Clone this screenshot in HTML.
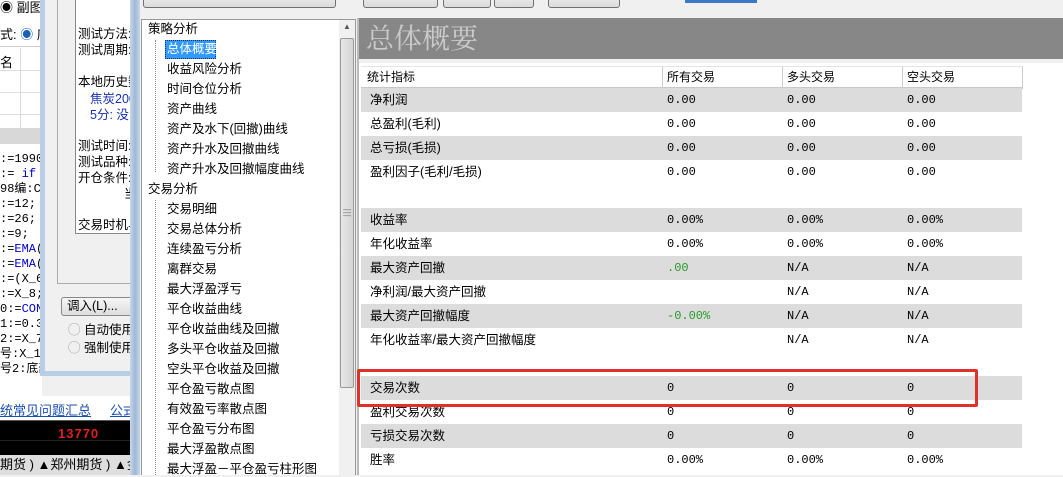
<!DOCTYPE html>
<html><head><meta charset="utf-8"><style>
*{margin:0;padding:0;box-sizing:border-box}
body{width:1063px;height:475px;overflow:hidden;position:relative;background:#f0f0f0;font-family:"Liberation Sans","Noto Sans CJK SC",sans-serif;font-size:12px;color:#000}
.a{position:absolute;white-space:nowrap}
.code{font-family:"Liberation Mono","Noto Sans CJK SC",monospace;font-size:12px;line-height:15px}
.btn{position:absolute;top:-10px;height:18px;border:1px solid #707070;border-radius:3px;background:linear-gradient(#f2f2f2,#dcdcdc)}
.ti{position:absolute;left:167px;font-size:12.5px;line-height:16px}
.row{position:absolute;left:361px;width:661px;height:24px;font-size:12.5px;line-height:24px}
.row span{position:absolute}
.g{background:#dcdcdc}
.mono{font-family:"Liberation Mono",monospace;font-size:12px}
</style></head><body>
<div class="a" style="left:0;top:0;width:42px;height:475px;background:#fff"></div>
<div class="a" style="left:0;top:0;font-size:13px;line-height:16px">◉ 副图</div>
<div class="a" style="left:0;top:24px;font-size:13px">式: <span style="color:#1a5fb4">◉</span> 序</div>
<div class="a" style="left:0;top:46px;width:42px;height:1px;background:#ccc"></div>
<div class="a" style="left:0;top:52px;font-size:13px">名</div>
<div class="a" style="left:20px;top:48px;width:1px;height:80px;background:#ddd"></div>
<div class="a" style="left:0;top:70px;width:42px;height:1px;background:#ddd"></div>
<div class="a" style="left:0;top:92px;width:42px;height:1px;background:#ddd"></div>
<div class="a" style="left:0;top:114px;width:42px;height:1px;background:#ddd"></div>
<div class="a" style="left:0;top:128px;width:42px;height:16px;background:#d8d8d8"></div>
<div class="a code" style="left:0;top:152px">:=1990<br>:= <span style="color:#00c">if</span><br>98编:C<br>:=12;<br>:=26;<br>:=9;<br>:=<span style="color:#00c">EMA</span>(<br>:=<span style="color:#00c">EMA</span>(<br>:=(X_6<br>:=X_8;<br>0:=<span style="color:#00c">CON</span><br>1:=0.3<br>2:=X_7<br>号:X_12<br>号2:底部 <span style="color:#00c">AND COUNT</span></div>
<div class="a" style="left:0;top:396px;width:140px;height:24px;background:#fff"></div>
<div class="a" style="left:0;top:400px;font-size:13px;color:#1a4fb0;text-decoration:underline">统常见问题汇总</div>
<div class="a" style="left:110px;top:400px;font-size:13px;color:#1a4fb0;text-decoration:underline">公式</div>
<div class="a" style="left:0;top:420px;width:140px;height:35px;background:#000;border-top:1px solid #555"></div>
<div class="a" style="left:0;top:440px;width:140px;height:1px;background:#222"></div>
<div class="a" style="left:58px;top:426px;color:#e02020;font-weight:bold;font-size:13px;letter-spacing:1px">13770</div>
<div class="a" style="left:0;top:455px;width:140px;height:20px;background:#dedede;font-size:13px;line-height:20px">期货 ) ▲郑州期货 ) ▲金</div>
<div class="a" style="left:40px;top:0;width:95px;height:376px;background:#f0f0f0;border-left:5px solid #b9cde5;border-bottom:5px solid #b9cde5"></div>
<div class="a" style="left:57px;top:0;width:80px;height:284px;border:1px solid #aaa;border-top:none"></div>
<div class="a" style="left:75px;top:0;width:60px;height:234px;background:#fff;border:1px solid #888;border-top:none;overflow:hidden;font-size:12.5px;line-height:16px">
<div style="position:absolute;top:26px;left:2px">测试方法:<br>测试周期:</div>
<div style="position:absolute;top:74px;left:2px">本地历史数</div>
<div style="position:absolute;top:91px;left:14px;color:#1a2fb0">焦炭200<br>5分: 没</div>
<div style="position:absolute;top:138px;left:2px">测试时间:<br>测试品种:<br>开仓条件:</div>
<div style="position:absolute;top:186px;left:48px">当</div>
<div style="position:absolute;top:217px;left:2px">交易时机与</div>
</div>
<div class="a" style="left:61px;top:297px;width:75px;height:19px;border:1px solid #888;border-radius:3px;background:linear-gradient(#f6f6f6,#ddd);font-size:12.5px;line-height:17px;padding-left:5px">调入(L)...</div>
<div class="a" style="left:68px;top:321px;font-size:12.5px;line-height:18px"><span style="color:#999">◯</span> 自动使用<br><span style="color:#999">◯</span> 强制使用</div>
<div class="a" style="left:130px;top:0;width:10px;height:475px;background:linear-gradient(90deg,#c6d7ea,#9fb8d6,#c6d7ea)"></div>
<div class="a" style="left:140px;top:0;width:923px;height:475px;background:#f0f0f0"></div>
<div class="btn" style="left:143px;width:193px"></div>
<div class="btn" style="left:363px;width:75px"></div>
<div class="btn" style="left:443px;width:48px"></div>
<div class="btn" style="left:494px;width:40px"></div>
<div class="btn" style="left:548px;width:72px"></div>
<div class="a" style="left:685px;top:0;width:72px;height:3px;background:#3a78c8"></div>
<div class="a" style="left:141px;top:19px;width:215px;height:456px;background:#fff;border:1px solid #999;border-bottom:none"></div>
<div class="a" style="left:339px;top:20px;width:16px;height:455px;background:#f0f0f0"></div>
<div class="a" style="left:340px;top:22px;width:14px;height:14px;font-size:8px;text-align:center;color:#555">▲</div>
<div class="a" style="left:340px;top:38px;width:14px;height:350px;border:1px solid #999;border-radius:2px;background:linear-gradient(90deg,#e8e8e8,#d4d4d4)"></div>
<div class="a" style="left:343px;top:208px;font-size:8px;color:#666;line-height:3px">—<br>—<br>—</div>
<div class="a" style="left:148px;top:21px;font-size:12.5px;line-height:16px">策略分析</div>
<div class="a" style="left:148px;top:181px;font-size:12.5px;line-height:16px">交易分析</div>
<div class="a" style="left:155px;top:40px;width:1px;height:132px;border-left:1px dotted #888"></div>
<div class="a" style="left:155px;top:200px;width:1px;height:275px;border-left:1px dotted #888"></div>
<div class="a" style="left:165px;top:40px;width:51px;height:19px;background:#3399ff;border:1px dotted #036"></div>
<div class="ti" style="top:41px;color:#fff">总体概要</div>
<div class="ti" style="top:61px">收益风险分析</div>
<div class="ti" style="top:81px">时间仓位分析</div>
<div class="ti" style="top:101px">资产曲线</div>
<div class="ti" style="top:121px">资产及水下(回撤)曲线</div>
<div class="ti" style="top:141px">资产升水及回撤曲线</div>
<div class="ti" style="top:161px">资产升水及回撤幅度曲线</div>
<div class="ti" style="top:201px">交易明细</div>
<div class="ti" style="top:221px">交易总体分析</div>
<div class="ti" style="top:241px">连续盈亏分析</div>
<div class="ti" style="top:261px">离群交易</div>
<div class="ti" style="top:281px">最大浮盈浮亏</div>
<div class="ti" style="top:301px">平仓收益曲线</div>
<div class="ti" style="top:321px">平仓收益曲线及回撤</div>
<div class="ti" style="top:341px">多头平仓收益及回撤</div>
<div class="ti" style="top:361px">空头平仓收益及回撤</div>
<div class="ti" style="top:381px">平仓盈亏散点图</div>
<div class="ti" style="top:401px">有效盈亏率散点图</div>
<div class="ti" style="top:421px">平仓盈亏分布图</div>
<div class="ti" style="top:441px">最大浮盈散点图</div>
<div class="ti" style="top:461px">最大浮盈－平仓盈亏柱形图</div>
<div class="a" style="left:357px;top:18px;width:706px;height:457px;background:#fff;border-left:2px solid #bbb"></div>
<div class="a" style="left:359px;top:18px;width:704px;height:41px;background:#878787"></div>
<div class="a" style="left:366px;top:18px;font-size:28px;line-height:38px;color:#cacaca;font-family:'Noto Serif CJK SC',serif">总体概要</div>
<div class="a" style="left:359px;top:59px;width:704px;height:4px;background:#f0f0f0"></div>
<div class="a" style="left:361px;top:66px;width:662px;height:23px;border-top:1px solid #e4e4e4;border-bottom:2px solid #c8c8c8;font-size:12px;line-height:21px">
<span class="a" style="left:6px">统计指标</span>
<span class="a" style="left:301px;height:21px;border-left:1px solid #ccc;padding-left:4px">所有交易</span>
<span class="a" style="left:421px;height:21px;border-left:1px solid #ccc;padding-left:4px">多头交易</span>
<span class="a" style="left:541px;height:21px;border-left:1px solid #ccc;padding-left:4px">空头交易</span>
<span class="a" style="left:661px;height:21px;border-left:1px solid #ccc"></span>
</div>
<div class="row g" style="top:88px"><span style="left:9px">净利润</span><span class="mono" style="left:306px">0.00</span><span class="mono" style="left:426px">0.00</span><span class="mono" style="left:546px">0.00</span></div>
<div class="row" style="top:112px"><span style="left:9px">总盈利(毛利)</span><span class="mono" style="left:306px">0.00</span><span class="mono" style="left:426px">0.00</span><span class="mono" style="left:546px">0.00</span></div>
<div class="row g" style="top:136px"><span style="left:9px">总亏损(毛损)</span><span class="mono" style="left:306px">0.00</span><span class="mono" style="left:426px">0.00</span><span class="mono" style="left:546px">0.00</span></div>
<div class="row" style="top:160px"><span style="left:9px">盈利因子(毛利/毛损)</span><span class="mono" style="left:306px">0.00</span><span class="mono" style="left:426px">0.00</span><span class="mono" style="left:546px">0.00</span></div>
<div class="row g" style="top:208px"><span style="left:9px">收益率</span><span class="mono" style="left:306px">0.00%</span><span class="mono" style="left:426px">0.00%</span><span class="mono" style="left:546px">0.00%</span></div>
<div class="row" style="top:232px"><span style="left:9px">年化收益率</span><span class="mono" style="left:306px">0.00%</span><span class="mono" style="left:426px">0.00%</span><span class="mono" style="left:546px">0.00%</span></div>
<div class="row g" style="top:256px"><span style="left:9px">最大资产回撤</span><span class="mono" style="left:306px;color:#2a9a2a">.00</span><span class="mono" style="left:426px">N/A</span><span class="mono" style="left:546px">N/A</span></div>
<div class="row" style="top:280px"><span style="left:9px">净利润/最大资产回撤</span><span class="mono" style="left:426px">N/A</span><span class="mono" style="left:546px">N/A</span></div>
<div class="row g" style="top:304px"><span style="left:9px">最大资产回撤幅度</span><span class="mono" style="left:306px;color:#2a9a2a">-0.00%</span><span class="mono" style="left:426px">N/A</span><span class="mono" style="left:546px">N/A</span></div>
<div class="row" style="top:328px"><span style="left:9px">年化收益率/最大资产回撤幅度</span><span class="mono" style="left:426px">N/A</span><span class="mono" style="left:546px">N/A</span></div>
<div class="row g" style="top:376px"><span style="left:9px">交易次数</span><span class="mono" style="left:306px">0</span><span class="mono" style="left:426px">0</span><span class="mono" style="left:546px">0</span></div>
<div class="row" style="top:400px"><span style="left:9px">盈利交易次数</span><span class="mono" style="left:306px">0</span><span class="mono" style="left:426px">0</span><span class="mono" style="left:546px">0</span></div>
<div class="row g" style="top:424px"><span style="left:9px">亏损交易次数</span><span class="mono" style="left:306px">0</span><span class="mono" style="left:426px">0</span><span class="mono" style="left:546px">0</span></div>
<div class="row" style="top:448px"><span style="left:9px">胜率</span><span class="mono" style="left:306px">0.00%</span><span class="mono" style="left:426px">0.00%</span><span class="mono" style="left:546px">0.00%</span></div>
<div class="a" style="left:357px;top:369px;width:621px;height:38px;border:3px solid #e0302a;border-radius:2px"></div>
</body></html>
